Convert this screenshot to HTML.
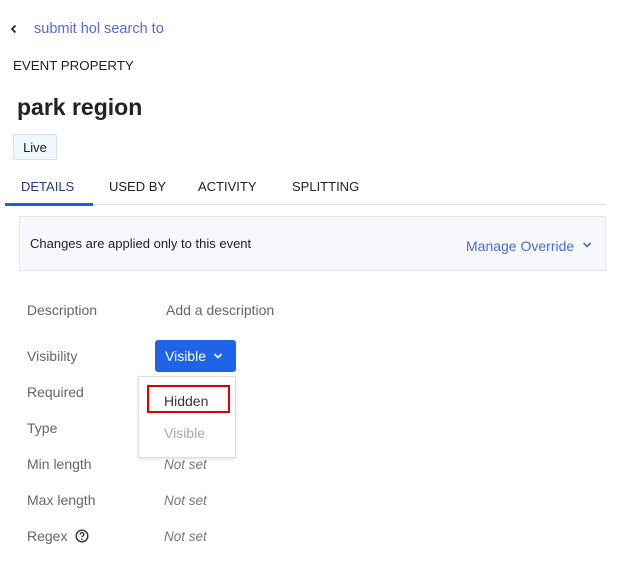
<!DOCTYPE html>
<html><head><style>
*{margin:0;padding:0;box-sizing:border-box}
body{width:619px;height:577px;background:#fff;font-family:"Liberation Sans",sans-serif;position:relative;overflow:hidden;color:#222}
.a{position:absolute;white-space:nowrap;line-height:1}
.lbl{position:absolute;left:27px;font-size:14px;color:#666;line-height:1}
.ns{position:absolute;left:164px;font-size:13.5px;color:#777;font-style:italic;line-height:1}
</style></head><body>
<svg class="a" style="left:9px;top:24px" width="10" height="10" viewBox="0 0 10 10"><path d="M6.5 1.5L3 5l3.5 3.5" stroke="#222" stroke-width="1.8" fill="none"/></svg>
<div class="a" style="left:34px;top:22px;font-size:14.5px;color:#5a68d8">submit hol search to</div>
<div class="a" style="left:13px;top:59px;font-size:13.3px;color:#222">EVENT PROPERTY</div>
<div class="a" style="left:17px;top:96px;font-size:23px;font-weight:bold;color:#222">park region</div>
<div class="a" style="left:13px;top:134px;width:44px;height:26px;background:#f1f7fe;border:1px solid #cfe2f6;border-radius:2px;font-size:13px;padding-top:6px;text-align:center">Live</div>
<div class="a" style="left:21px;top:180px;font-size:13px;color:#2a3a80">DETAILS</div>
<div class="a" style="left:109px;top:180px;font-size:13px">USED BY</div>
<div class="a" style="left:198px;top:180px;font-size:13px">ACTIVITY</div>
<div class="a" style="left:292px;top:180px;font-size:13px">SPLITTING</div>
<div class="a" style="left:5px;top:204px;width:601px;height:1px;background:#ddd"></div>
<div class="a" style="left:5px;top:203px;width:88px;height:3px;background:#1f5fe8"></div>
<div class="a" style="left:19px;top:216px;width:587px;height:55px;background:#f7f8fb;border:1px solid #e2e5ea"></div>
<div class="a" style="left:30px;top:237px;font-size:13px;color:#222">Changes are applied only to this event</div>
<div class="a" style="left:466px;top:239px;font-size:14px;color:#4a6cd6">Manage Override</div>
<svg class="a" style="left:582px;top:241px" width="10" height="8" viewBox="0 0 10 8"><path d="M1.5 2l3.5 3.5L8.5 2" stroke="#4a6cd6" stroke-width="1.6" fill="none"/></svg>
<div class="lbl" style="top:303px">Description</div>
<div class="a" style="left:166px;top:303px;font-size:14px;color:#666">Add a description</div>
<div class="lbl" style="top:349px">Visibility</div>
<div class="a" style="left:155px;top:340px;width:81px;height:32px;background:#1f63e9;border-radius:3px;color:#fff;font-size:14px;padding:9px 0 0 10px">Visible</div>
<svg class="a" style="left:213px;top:352px" width="10" height="8" viewBox="0 0 10 8"><path d="M1.5 2l3.5 3.5L8.5 2" stroke="#fff" stroke-width="1.6" fill="none"/></svg>
<div class="lbl" style="top:385px">Required</div>
<div class="lbl" style="top:421px">Type</div>
<div class="lbl" style="top:457px">Min length</div>
<div class="lbl" style="top:493px">Max length</div>
<div class="lbl" style="top:529px">Regex</div>
<svg class="a" style="left:75px;top:529px" width="14" height="14" viewBox="0 0 14 14"><circle cx="7" cy="7" r="5.8" stroke="#333" stroke-width="1.4" fill="none"/><path d="M5.2 5.5a1.8 1.8 0 1 1 2.5 1.6c-.5.3-.7.6-.7 1.2" stroke="#333" stroke-width="1.3" fill="none"/><circle cx="7" cy="10.2" r=".8" fill="#333"/></svg>
<div class="ns" style="top:458px">Not set</div>
<div class="ns" style="top:494px">Not set</div>
<div class="ns" style="top:530px">Not set</div>
<div class="a" style="left:138px;top:376px;width:98px;height:82px;background:#fff;border:1px solid #ddd;box-shadow:0 1px 3px rgba(0,0,0,.12)"></div>
<div class="a" style="left:147px;top:385px;width:83px;height:28px;border:2px solid #e00000"></div>
<div class="a" style="left:164px;top:394px;font-size:14px;color:#333">Hidden</div>
<div class="a" style="left:164px;top:426px;font-size:14px;color:#aaa">Visible</div>
</body></html>
